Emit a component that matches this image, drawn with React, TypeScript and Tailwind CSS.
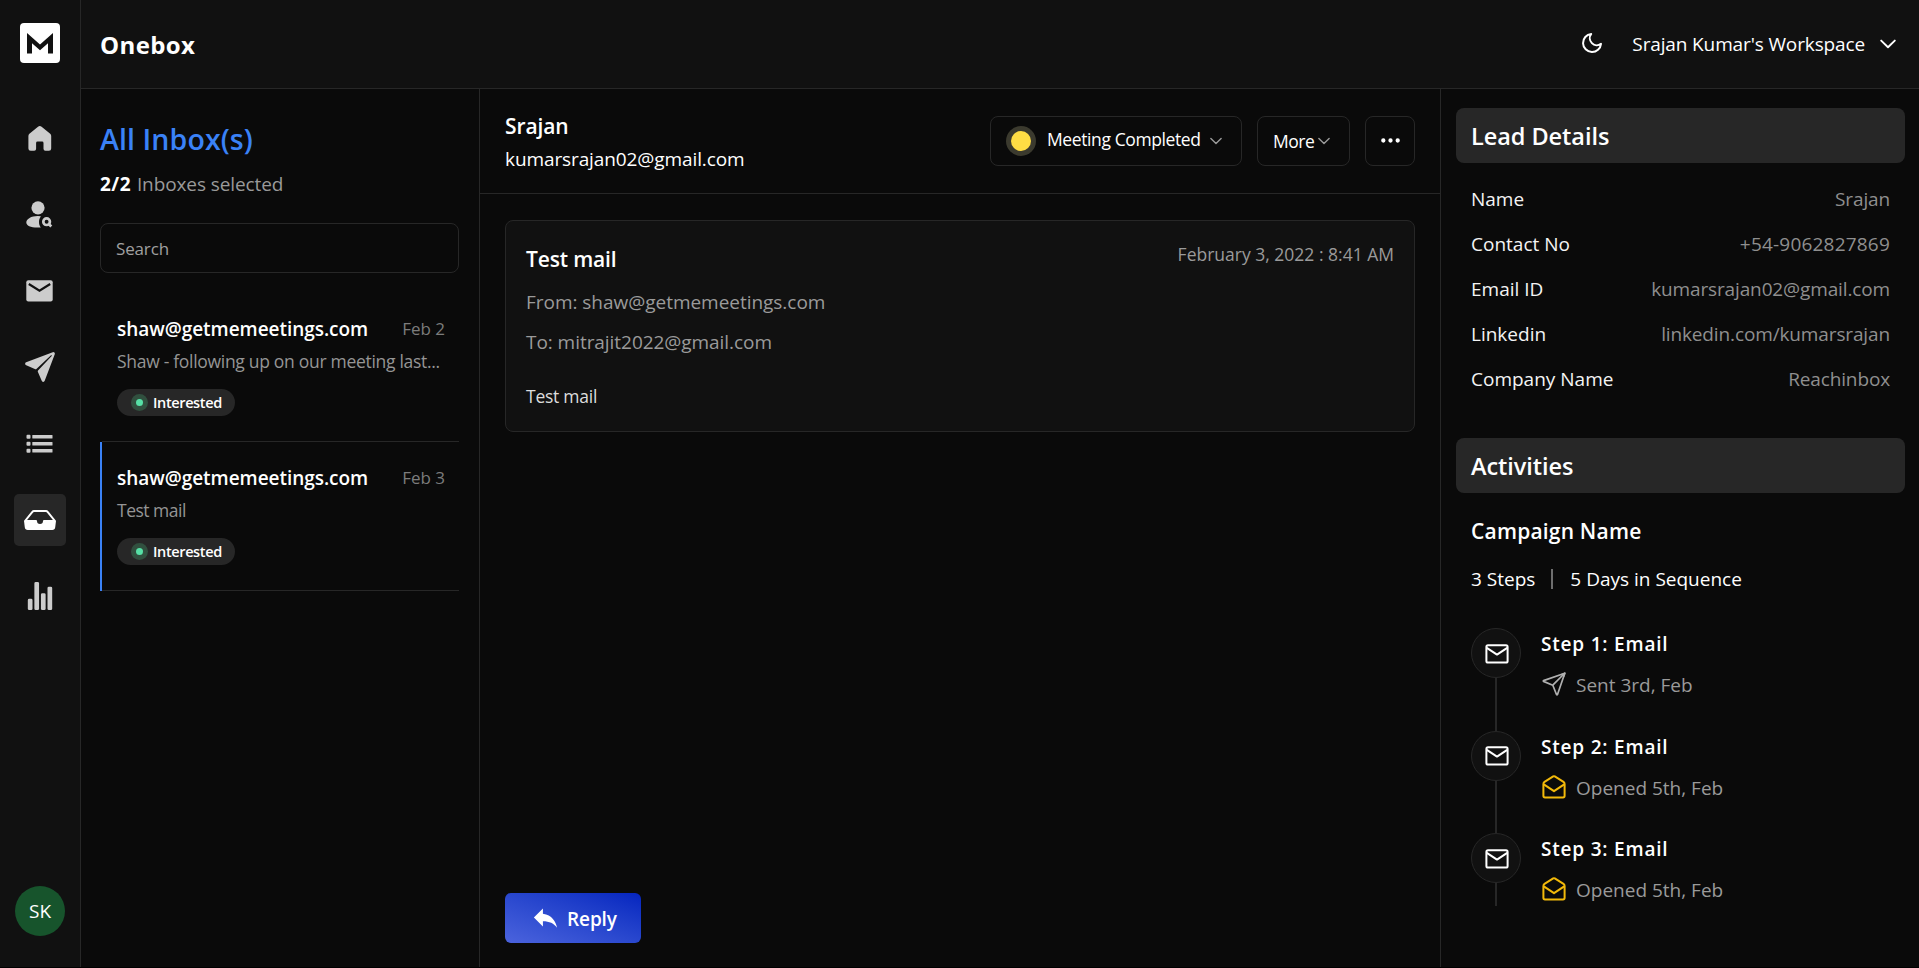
import type { ReactNode } from 'react'
import { BsInboxFill, BsThreeDots } from 'react-icons/bs'
import { FiMoon } from 'react-icons/fi'
import { IoPaperPlane, IoStatsChart } from 'react-icons/io5'
import { MdReply } from 'react-icons/md'

function Logo() {
  return (
    <div className="flex size-10 items-center justify-center rounded-[4px] bg-white">
      <svg className="h-[21px] w-[26px]" viewBox="0 0 26 21" fill="#111111">
        <path d="M0 0L13 11.5L26 0V20.5H21V10.2L13 17.2L5 10.2V20.5H0Z" />
      </svg>
    </div>
  )
}

function HomeIcon() {
  return (
    <svg className="h-[25px] w-6" viewBox="0 0 24 25" fill="currentColor">
      <path d="M10 .7L1.4 7.8Q.4 8.7.4 10V22.4Q.4 24.8 2.7 24.8H6.2Q8.1 24.8 8.1 22.8V17Q8.1 15.6 9.5 15.6H14.1Q15.5 15.6 15.5 17V22.8Q15.5 24.8 17.4 24.8H20.9Q23.2 24.8 23.2 22.4V10Q23.2 8.7 22.2 7.8L13.6.7Q11.8-.6 10 .7Z" />
    </svg>
  )
}

function PersonSearchIcon() {
  return (
    <svg className="h-[27px] w-[27px]" viewBox="0 0 27 27" fill="none">
      <circle cx="12" cy="6.8" r="6.6" fill="currentColor" />
      <path
        d="M14.9 15.2C13.6 17.1 13 18.9 13 21C13 23.3 13.6 25.1 14.8 26.4Q13.3 26.6 11.5 26.6C4.5 26.6.3 24.6.3 21.5C.3 17.8 5.3 14.9 11.8 14.9Q13.4 14.9 14.9 15.2Z"
        fill="currentColor"
      />
      <circle cx="20.6" cy="20.7" r="3.3" stroke="currentColor" strokeWidth="2.7" />
      <path d="M23 23.2L25.3 25.5" stroke="currentColor" strokeWidth="2.7" />
    </svg>
  )
}

function MailSolidIcon() {
  return (
    <svg className="h-[22px] w-[27px]" viewBox="0 0 27 22" fill="none">
      <rect x=".3" y=".2" width="26.4" height="21.4" rx="2" fill="currentColor" />
      <path d="M2.8 4L13.5 10.6L24.2 4" stroke="#111111" strokeWidth="2.2" />
    </svg>
  )
}

function ListIcon() {
  return (
    <svg className="h-5 w-[27px]" viewBox="0 0 27 20" fill="currentColor">
      {[1, 8, 15].map((y) => (
        <g key={y}>
          <rect x=".5" y={y - 0.2} width="4" height="4" rx="1" />
          <rect x="6.3" y={y} width="20.2" height="3.5" rx=".6" />
        </g>
      ))}
    </svg>
  )
}

function ChevronDown({ className }: { className: string }) {
  return (
    <svg className={className} viewBox="0 0 16 10" fill="none" stroke="currentColor" strokeLinecap="round" strokeLinejoin="round">
      <path d="M1.2 1.6L8 8.2L14.8 1.6" strokeWidth="1.9" />
    </svg>
  )
}

function MailIcon() {
  return (
    <svg className="mt-px ml-px h-5 w-6" viewBox="0 0 24 20" fill="none" stroke="currentColor" strokeWidth="2" strokeLinejoin="round">
      <rect x="1.4" y="1.3" width="21.2" height="17.2" rx="1.6" />
      <path d="M1.8 3.8L12 10.6L22.2 3.8" />
    </svg>
  )
}

function MailOpenIcon() {
  return (
    <svg className="h-6 w-6 text-[#f2b90a]" viewBox="0 0 24 24" fill="none" stroke="currentColor" strokeWidth="2" strokeLinejoin="round">
      <path d="M1.4 9Q1.4 7.6 2.5 6.9L11.2 1.4Q12 .9 12.8 1.4L21.5 6.9Q22.6 7.6 22.6 9V20.8Q22.6 22.4 21 22.4H3Q1.4 22.4 1.4 20.8Z" />
      <path d="M1.8 9.4L12 16.2L22.2 9.4" />
    </svg>
  )
}

function PlaneIcon() {
  return (
    <svg className="h-6 w-6 text-[#b0b0b0]" viewBox="0 0 24 24" fill="none" stroke="currentColor" strokeWidth="1.7" strokeLinejoin="round">
      <path d="M22.8 1.2L1.5 8.6Q1 9 1.5 9.4L10.8 13.2L14.5 22.5Q15 23.1 15.5 22.5Z" />
      <path d="M22.4 1.5L10.8 13.2" />
      <path d="M19.4 2.7L22.8 1.2L21.4 4.6" />
    </svg>
  )
}

const NAV: { name: string; icon: ReactNode; active?: boolean }[] = [
  { name: 'home', icon: <HomeIcon /> },
  { name: 'people', icon: <PersonSearchIcon /> },
  { name: 'mail', icon: <MailSolidIcon /> },
  { name: 'send', icon: <IoPaperPlane className="size-[34px]" /> },
  { name: 'list', icon: <ListIcon /> },
  { name: 'inbox', icon: <BsInboxFill className="size-[32px]" />, active: true },
  { name: 'stats', icon: <IoStatsChart className="size-[30px]" /> },
]

function Sidebar() {
  return (
    <aside className="flex w-[81px] shrink-0 flex-col items-center border-r border-[#272727] bg-[#111111] pt-[23px] pb-[31px]">
      <Logo />
      <nav className="mt-[50px] flex flex-col gap-[24.25px] text-[#cccccc]">
        {NAV.map((n) => (
          <div
            key={n.name}
            className={
              n.active
                ? 'flex size-[52px] items-center justify-center rounded-[5px] bg-[#272727] pr-px text-white'
                : 'flex size-[52px] items-center justify-center pr-px pb-px'
            }
          >
            {n.icon}
          </div>
        ))}
      </nav>
      <div className="mt-auto flex size-[50px] items-center justify-center rounded-full bg-[#17542c] pt-px text-[19px] text-white">
        SK
      </div>
    </aside>
  )
}

function TopBar() {
  return (
    <header className="flex h-[89px] shrink-0 items-center border-b border-[#272727] bg-[#111111] pr-[23px] pl-[19px] text-white">
      <h1 className="mt-[2px] text-[24px] font-bold tracking-[0.4px]">Onebox</h1>
      <FiMoon className="mr-[28px] mb-[2px] ml-auto size-6" />
      <span className="mt-px mr-[15px] text-[19px] tracking-[-0.13px]">Srajan Kumar's Workspace</span>
      <ChevronDown className="mb-px h-[10px] w-4" />
    </header>
  )
}

const MAILS = [
  { date: 'Feb 2', text: 'Shaw - following up on our meeting last...', selected: false },
  { date: 'Feb 3', text: 'Test mail', selected: true },
]

function InboxList() {
  return (
    <section className="flex w-[399px] shrink-0 flex-col border-r border-[#272727] pt-8 pr-5 pl-[19px]">
      <h2 className="h-9 text-[28.5px] leading-9 font-semibold tracking-[0.1px] text-[#3a82f7]">All Inbox(s)</h2>
      <p className="mt-[15px] h-6 text-[19px] leading-6 tracking-[-0.1px] text-[#9a9a9a]">
        <span className="mr-px font-bold tracking-[0.5px] text-white">2/2</span> Inboxes selected
      </p>
      <div className="mt-[27px] flex h-[50px] items-center rounded-lg border border-[#272727] px-[15px] pt-px text-[17px] tracking-[-0.15px] text-[#a0a0a0]">
        Search
      </div>
      <div className="mt-[19px] flex flex-col">
        {MAILS.map((m) => (
          <div key={m.date} className={m.selected ? 'flex h-[150px]' : 'flex h-[149px]'}>
            <div className={m.selected ? 'mt-px w-[2px] bg-[#3a82f7]' : 'w-[2px]'} />
            <div
              className={
                m.selected
                  ? 'flex grow flex-col border-y border-[#272727] pt-6 pr-[14px] pl-[15px]'
                  : 'flex grow flex-col pt-[25px] pr-[14px] pl-[15px]'
              }
            >
              <div className="flex h-6 items-center justify-between">
                <span className="text-[19px] leading-6 font-semibold tracking-[-0.04px] text-white">
                  shaw@getmemeetings.com
                </span>
                <span className="text-[17px] leading-6 text-[#7c7c7c]">{m.date}</span>
              </div>
              <p
                className={
                  m.selected
                    ? 'mt-2 h-6 text-[17.5px] leading-6 tracking-[-0.5px] whitespace-nowrap text-[#959595]'
                    : 'mt-2 h-6 text-[17.5px] leading-6 tracking-[-0.3px] whitespace-nowrap text-[#959595]'
                }
              >
                {m.text}
              </p>
              <div className="mt-4 flex h-[27px] w-[118px] items-center rounded-full bg-[#272727] pl-[14px]">
                <span className="flex size-[17px] items-center justify-center rounded-full bg-[#31503f]">
                  <span className="size-[7px] rounded-full bg-[#57e0a6]" />
                </span>
                <span className="ml-[5px] text-[14.5px] leading-[27px] font-semibold tracking-[-0.37px] text-white">
                  Interested
                </span>
              </div>
            </div>
          </div>
        ))}
      </div>
    </section>
  )
}

function Conversation() {
  return (
    <main className="flex w-[960px] shrink-0 flex-col">
      <div className="flex h-[105px] shrink-0 justify-between border-b border-[#272727] pt-[22px] pr-[25px] pl-[25px] text-white">
        <div>
          <p className="mt-px h-7 text-[21px] leading-7 font-semibold tracking-[-0.1px]">Srajan</p>
          <p className="mt-[7px] h-6 text-[19px] leading-6 tracking-[-0.1px]">kumarsrajan02@gmail.com</p>
        </div>
        <div className="mt-[5px] flex h-[50px] gap-[15px] text-[17.5px]">
          <div className="flex w-[252px] items-center rounded-lg border border-[#272727] pl-[15px]">
            <span className="flex size-[30px] items-center justify-center rounded-full bg-[#3b3a2e]">
              <span className="size-5 rounded-full bg-[#ffdd44]" />
            </span>
            <span className="mb-[4px] ml-[11px] w-[163px] leading-6 tracking-[-0.4px]">Meeting Completed</span>
            <ChevronDown className="h-2 w-3 text-[#9a9a9a]" />
          </div>
          <div className="flex w-[93px] items-center rounded-lg border border-[#272727] pl-[15px]">
            <span className="w-[45px] leading-6 tracking-[-0.5px]">More</span>
            <ChevronDown className="h-2 w-3 text-[#9a9a9a]" />
          </div>
          <div className="flex w-[50px] items-center justify-center rounded-lg border border-[#272727] pb-px">
            <BsThreeDots className="size-[23px]" />
          </div>
        </div>
      </div>
      <article className="mt-[26px] mr-[25px] ml-[25px] h-[212px] rounded-lg border border-[#272727] bg-[#111111] px-5 pt-[23px]">
        <div className="flex justify-between">
          <h3 className="mt-px h-7 text-[21px] leading-7 font-semibold tracking-[-0.15px] text-white">Test mail</h3>
          <span className="-mt-[2px] h-6 text-[17.5px] leading-6 text-[#9a9a9a]">February 3, 2022 : 8:41 AM</span>
        </div>
        <p className="mt-[17px] h-6 text-[19px] leading-6 tracking-[-0.03px] text-[#9a9a9a]">From: shaw@getmemeetings.com</p>
        <p className="mt-4 h-6 text-[19px] leading-6 tracking-[-0.05px] text-[#9a9a9a]">To: mitrajit2022@gmail.com</p>
        <p className="mt-[30px] h-6 text-[17.5px] leading-6 tracking-[-0.25px] text-[#dddddd]">Test mail</p>
      </article>
      <button className="mt-auto mb-6 ml-[25px] flex h-[50px] w-[136px] items-center rounded-md bg-linear-to-tr from-[#4b63dd] to-[#0524bf] pl-[25px] text-[19px] font-semibold text-white">
        <MdReply className="mb-[2px] size-[31px]" />
        <span className="mt-[2px] ml-[6px] leading-6 tracking-[-0.1px]">Reply</span>
      </button>
    </main>
  )
}

const DETAILS: [string, string][] = [
  ['Name', 'Srajan'],
  ['Contact No', '+54-9062827869'],
  ['Email ID', 'kumarsrajan02@gmail.com'],
  ['Linkedin', 'linkedin.com/kumarsrajan'],
  ['Company Name', 'Reachinbox'],
]

const STEPS = [
  { title: 'Step 1: Email', status: 'Sent 3rd, Feb', icon: <PlaneIcon /> },
  { title: 'Step 2: Email', status: 'Opened 5th, Feb', icon: <MailOpenIcon /> },
  { title: 'Step 3: Email', status: 'Opened 5th, Feb', icon: <MailOpenIcon /> },
]

function SectionBar({ children }: { children: ReactNode }) {
  return (
    <h2 className="flex h-[55px] shrink-0 items-center rounded-lg bg-[#272727] pt-[3px] pl-[15px] text-[23.5px] font-semibold tracking-[-0.05px] text-white">
      {children}
    </h2>
  )
}

function LeadPanel() {
  return (
    <aside className="flex grow flex-col border-l border-[#272727] pt-[19px] pr-[14px] pl-[15px]">
      <SectionBar>Lead Details</SectionBar>
      <dl className="mt-[14px] mb-[36px] px-[15px] text-[19px]">
        {DETAILS.map(([k, v]) => (
          <div key={k} className="flex h-[45px] items-center justify-between">
            <dt className="text-[#f4f4f4]">{k}</dt>
            <dd
              className={
                v.startsWith('+')
                  ? 'tracking-[0.2px] text-[#8f8f8f]'
                  : 'tracking-[-0.13px] text-[#8f8f8f]'
              }
            >
              {v}
            </dd>
          </div>
        ))}
      </dl>
      <SectionBar>Activities</SectionBar>
      <div className="flex flex-col pl-[15px] text-[19px] text-white">
        <h3 className="mt-6 h-7 text-[21px] leading-7 font-semibold tracking-[0.2px]">Campaign Name</h3>
        <div className="mt-[22px] flex h-6 items-center leading-6">
          <span>3 Steps</span>
          <span className="mr-[17px] ml-[16px] h-5 w-[2px] bg-[#6e6e6e]" />
          <span>5 Days in Sequence</span>
        </div>
        <ol className="mt-[37px] flex flex-col">
          {STEPS.map((s, i) => (
            <li key={s.title} className={i < 2 ? 'flex h-[102.5px]' : 'flex h-[73px]'}>
              <div className="flex w-[50px] flex-col items-center">
                <span className="flex size-[50px] shrink-0 items-center justify-center rounded-full border border-[#272727] bg-[#111111]">
                  <MailIcon />
                </span>
                <span className="w-[2px] grow bg-[#272727]" />
              </div>
              <div className="ml-5 pt-1">
                <p className="h-6 leading-6 font-semibold tracking-[0.8px]">{s.title}</p>
                <div className="mt-4 ml-px flex h-6 items-center gap-[10px] leading-6 text-[#9a9a9a]">
                  {s.icon}
                  <span className="mt-[2px]">{s.status}</span>
                </div>
              </div>
            </li>
          ))}
        </ol>
      </div>
    </aside>
  )
}

export default function App() {
  return (
    <div className="h-[968px] w-[1919px] overflow-hidden bg-black font-['Open_Sans','Noto_Sans',sans-serif]">
      <div className="flex h-[967px] bg-[#0a0a0a]">
        <Sidebar />
        <div className="flex grow flex-col">
          <TopBar />
          <div className="flex grow">
            <InboxList />
            <Conversation />
            <LeadPanel />
          </div>
        </div>
      </div>
    </div>
  )
}
